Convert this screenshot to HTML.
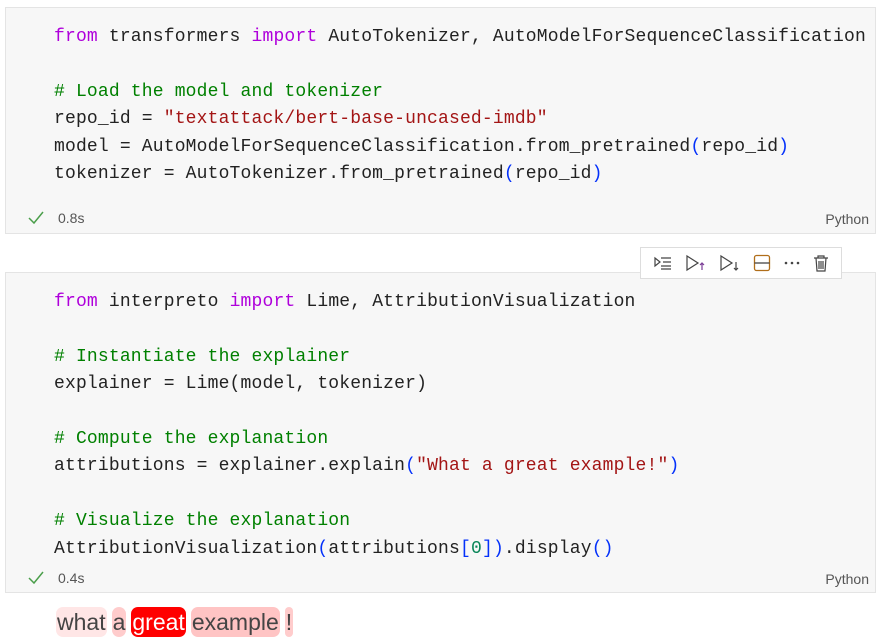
<!DOCTYPE html>
<html><head><style>
body{margin:0;background:#fff;width:881px;height:644px;position:relative;overflow:hidden;font-family:"Liberation Sans",sans-serif}
.cell{position:absolute;left:5px;width:869px;background:#f7f7f7;border:1px solid #e4e4e4}
.code{position:absolute;left:48px;font-family:"Liberation Mono",monospace;font-size:18px;letter-spacing:0.17px;line-height:27.4px;white-space:pre;color:#222}
.k{color:#af00db}.c{color:#008000}.s{color:#a31515}.p{color:#0431fa}.g{color:#098658}
.st{position:absolute;left:22px;font-size:14px;color:#555;display:flex;align-items:center;gap:14px}
.py{position:absolute;right:6px;font-size:14px;color:#555}
.tb{position:absolute;left:640px;top:247px;width:202px;height:32px;background:#fff;border:1px solid #ddd;display:flex;align-items:center;justify-content:space-around;padding:0 6px;box-sizing:border-box}
.out{position:absolute;left:56px;top:607px;font-size:23px;color:#444;line-height:30px;display:flex;gap:5px}
.out span{border-radius:7px;padding:0 1px}
</style></head><body>
<div class="cell" style="top:7px;height:225px">
<div class="code" style="top:16px"><span class="k">from</span> transformers <span class="k">import</span> AutoTokenizer, AutoModelForSequenceClassification

<span class="c"># Load the model and tokenizer</span>
repo_id = <span class="s">"textattack/bert-base-uncased-imdb"</span>
model = AutoModelForSequenceClassification.from_pretrained<span class="p">(</span>repo_id<span class="p">)</span>
tokenizer = AutoTokenizer.from_pretrained<span class="p">(</span>repo_id<span class="p">)</span></div>
<div class="st" style="top:202px"><svg width="16" height="14"><path d="M1 7l5 5L15 1" stroke="#4a9e4a" stroke-width="1.5" fill="none"/></svg><span>0.8s</span></div>
<div class="py" style="top:203px">Python</div>
</div>
<div class="cell" style="top:272px;height:319px">
<div class="code" style="top:16px"><span class="k">from</span> interpreto <span class="k">import</span> Lime, AttributionVisualization

<span class="c"># Instantiate the explainer</span>
explainer = Lime(model, tokenizer)

<span class="c"># Compute the explanation</span>
attributions = explainer.explain<span class="p">(</span><span class="s">"What a great example!"</span><span class="p">)</span>

<span class="c"># Visualize the explanation</span>
AttributionVisualization<span class="p">(</span>attributions<span class="p">[</span><span class="g">0</span><span class="p">]</span><span class="p">)</span>.display<span class="p">()</span></div>
<div class="st" style="top:297px"><svg width="16" height="14"><path d="M1 7l5 5L15 1" stroke="#4a9e4a" stroke-width="1.5" fill="none"/></svg><span>0.4s</span></div>
<div class="py" style="top:298px">Python</div>
</div>
<div class="tb">
<svg width="20" height="16" fill="none" stroke="#444" stroke-width="1.2"><path d="M2 3l5 4-5 4z"/><path d="M8 3h10M10 7h8M8 11h10M8 14h10"/></svg>
<svg width="22" height="18" fill="none" stroke="#444" stroke-width="1.2"><path d="M2 2l11 7-11 7z"/><path d="M17 16V9m-2 2l2-2 2 2" stroke="#7a3c96"/></svg>
<svg width="22" height="18" fill="none" stroke="#444" stroke-width="1.2"><path d="M2 2l11 7-11 7z"/><path d="M17 8v8m-2-2l2 2 2-2" stroke="#444"/></svg>
<svg width="18" height="18" fill="none" stroke="#444" stroke-width="1.3"><rect x="1.5" y="1.5" width="15" height="15" rx="2" stroke="#b06e1a"/><path d="M1.5 9h15"/></svg>
<svg width="18" height="6"><circle cx="3" cy="3" r="1.3" fill="#444"/><circle cx="9" cy="3" r="1.3" fill="#444"/><circle cx="15" cy="3" r="1.3" fill="#444"/></svg>
<svg width="16" height="18" fill="none" stroke="#444" stroke-width="1.2"><path d="M1 4h14M5 4V2h6v2M3 4l1 13h8l1-13M6 7v8M8 7v8M10 7v8"/></svg>
</div>
<div class="out">
<span style="background:#ffe6e6">what</span><span style="background:#ffcccc">a</span><span style="background:#ff0000;color:#fff">great</span><span style="background:#ffc4c4">example</span><span style="background:#ffcccc">!</span>
</div>
</body></html>
